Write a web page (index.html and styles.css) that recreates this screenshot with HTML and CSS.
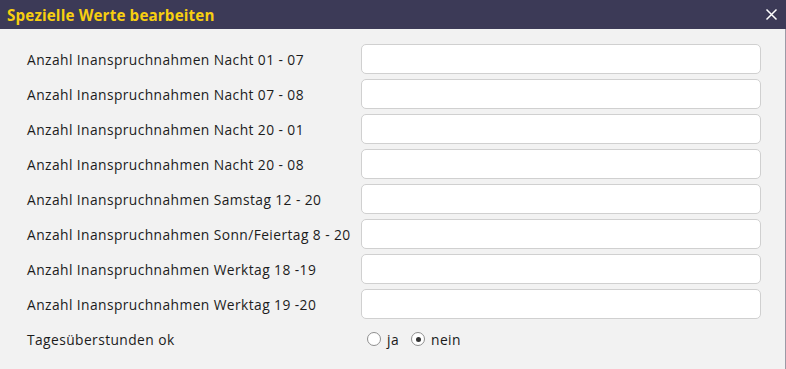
FILE: index.html
```html
<!DOCTYPE html>
<html lang="de">
<head>
<meta charset="utf-8">
<title>Spezielle Werte bearbeiten</title>
<link rel="stylesheet" href="styles.css">
</head>
<body>
<div class="dialog">
  <div class="titlebar">
    <span class="title">Spezielle Werte bearbeiten</span>
    <button class="close" aria-label="Schließen">
      <svg width="13" height="13" viewBox="0 0 13 13"><path d="M1.5 1.5 L11.5 11.5 M11.5 1.5 L1.5 11.5" stroke="#ffffff" stroke-width="1.5" fill="none"/></svg>
    </button>
  </div>
  <div class="content">
    <form class="form">
      <label class="lbl">Anzahl Inanspruchnahmen Nacht 01 - 07</label><input class="inp" type="text">
      <label class="lbl">Anzahl Inanspruchnahmen Nacht 07 - 08</label><input class="inp" type="text">
      <label class="lbl">Anzahl Inanspruchnahmen Nacht 20 - 01</label><input class="inp" type="text">
      <label class="lbl">Anzahl Inanspruchnahmen Nacht 20 - 08</label><input class="inp" type="text">
      <label class="lbl">Anzahl Inanspruchnahmen Samstag 12 - 20</label><input class="inp" type="text">
      <label class="lbl">Anzahl Inanspruchnahmen Sonn/Feiertag 8 - 20</label><input class="inp" type="text">
      <label class="lbl">Anzahl Inanspruchnahmen Werktag 18 -19</label><input class="inp" type="text">
      <label class="lbl">Anzahl Inanspruchnahmen Werktag 19 -20</label><input class="inp" type="text">
      <label class="lbl">Tagesüberstunden ok</label>
      <div class="radios">
        <label class="opt"><span class="radio"></span>ja</label>
        <label class="opt"><span class="radio checked"></span>nein</label>
      </div>
    </form>
  </div>
</div>
</body>
</html>
```
FILE: styles.css
```css
html, body {
  margin: 0;
  padding: 0;
  background: #f2f2f2;
}
body {
  font-family: "Open Sans", "Noto Sans", sans-serif;
  color: #1a1a1a;
}
.dialog {
  width: 786px;
  height: 369px;
  display: flex;
  flex-direction: column;
  background: #f2f2f2;
}
.titlebar {
  height: 29px;
  background: #3c3a57;
  display: flex;
  align-items: center;
  justify-content: space-between;
  padding: 0 8px 0 7px;
  box-sizing: border-box;
  flex: none;
}
.title {
  color: #f7cf10;
  font-weight: 700;
  font-size: 15.2px;
  letter-spacing: 0.15px;
}
.close {
  border: 0;
  background: transparent;
  padding: 0;
  width: 13px;
  height: 13px;
  display: flex;
}
.content {
  flex: 1;
  border-right: 1px solid #9c9aa6;
  padding: 15px 0 0 27px;
}
.form {
  display: grid;
  grid-template-columns: 334px 400px;
  grid-auto-rows: 30px;
  row-gap: 5px;
  margin: 0;
}
.lbl {
  display: flex;
  align-items: center;
  font-size: 13.8px;
  letter-spacing: 0.42px;
  color: #1c1c1c;
  white-space: nowrap;
}
.inp {
  box-sizing: border-box;
  height: 30px;
  width: 400px;
  margin: 0;
  border: 1px solid #d0d0d0;
  border-radius: 5px;
  background: #ffffff;
}
.radios {
  display: flex;
  align-items: center;
  padding-left: 6px;
  gap: 12px;
  font-size: 13.8px;
  letter-spacing: 0.42px;
}
.opt {
  display: flex;
  align-items: center;
  gap: 6px;
}
.radio {
  width: 12px;
  height: 12px;
  border: 1px solid #8f8f8f;
  border-radius: 50%;
  background: #fff;
  display: inline-block;
  position: relative;
}
.radio.checked::after {
  content: "";
  position: absolute;
  left: 3.5px;
  top: 3.5px;
  width: 5px;
  height: 5px;
  border-radius: 50%;
  background: #333;
}
```
